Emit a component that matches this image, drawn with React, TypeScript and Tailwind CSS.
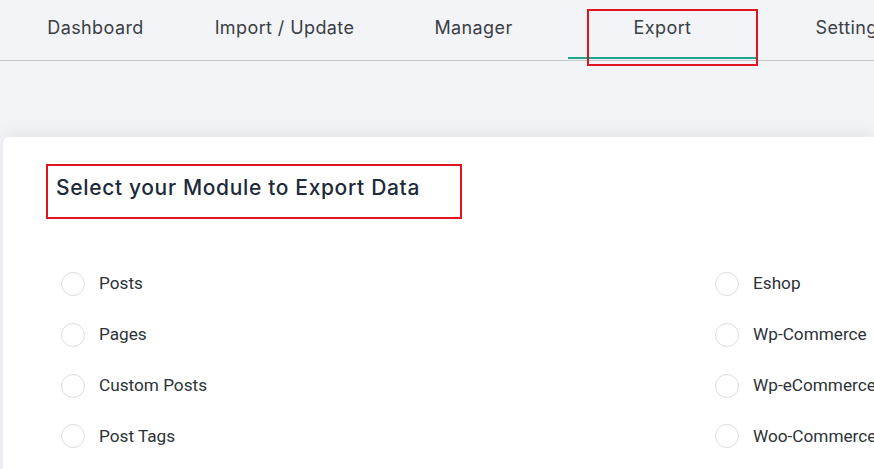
import React from "react";

const tabs = ["Dashboard", "Import / Update", "Manager", "Export", "Settings"];
const left = ["Posts", "Pages", "Custom Posts", "Post Tags"];
const right = ["Eshop", "Wp-Commerce", "Wp-eCommerce", "Woo-Commerce"];

function Radio({ label }: { label: string }) {
  return (
    <label className="flex items-center h-[50.7px]">
      <span className="w-[24px] h-[24px] rounded-full border border-[#dedede] bg-white shrink-0" />
      <span className="ml-[14px] text-[17.2px] text-[#2c3338] whitespace-nowrap" style={{ fontFamily: "Roboto, 'Liberation Sans', sans-serif" }}>
        {label}
      </span>
    </label>
  );
}

export default function App() {
  return (
    <div className="w-[874px] h-[469px] overflow-hidden bg-[#f3f4f7] relative" style={{ fontFamily: "Inter, 'Noto Sans', sans-serif" }}>
      <div className="relative flex h-[61px] border-b border-[#c3c4c7] pl-[1px] whitespace-nowrap">
        {tabs.map((t) => (
          <div
            key={t}
            className="relative w-[189px] shrink-0 flex justify-center pt-[14px] text-[18px] tracking-[0.4px] text-[#3a3f44]"
          >
            <span>{t}</span>
            {t === "Export" && (
              <span className="absolute left-0 right-[1px] bottom-[1px] h-[2px] bg-[#1fa58f]" />
            )}
          </div>
        ))}
        <div className="absolute left-[587px] top-[9px] w-[171px] h-[57px] border-2 border-[#e0141e]" />
      </div>
      <div className="pt-[76px] pl-[3px]">
        <div className="bg-white rounded-tl-[6px] shadow-[0_-4px_18px_rgba(0,0,0,0.07)] pl-[43px] pt-[27px] h-[400px]">
          <div className="w-[416px] h-[55px] border-2 border-[#e0141e] pl-[8px] pt-[7px]">
            <h2 className="text-[21px] leading-[30px] text-[#1d2a3a] font-medium tracking-[0.65px] whitespace-nowrap">Select your Module to Export Data</h2>
          </div>
          <div className="grid grid-cols-[654px_1fr] pl-[15px] pt-[40px]">
            <div className="flex flex-col">
              {left.map((l) => (
                <Radio key={l} label={l} />
              ))}
            </div>
            <div className="flex flex-col">
              {right.map((l) => (
                <Radio key={l} label={l} />
              ))}
            </div>
          </div>
        </div>
      </div>
    </div>
  );
}
